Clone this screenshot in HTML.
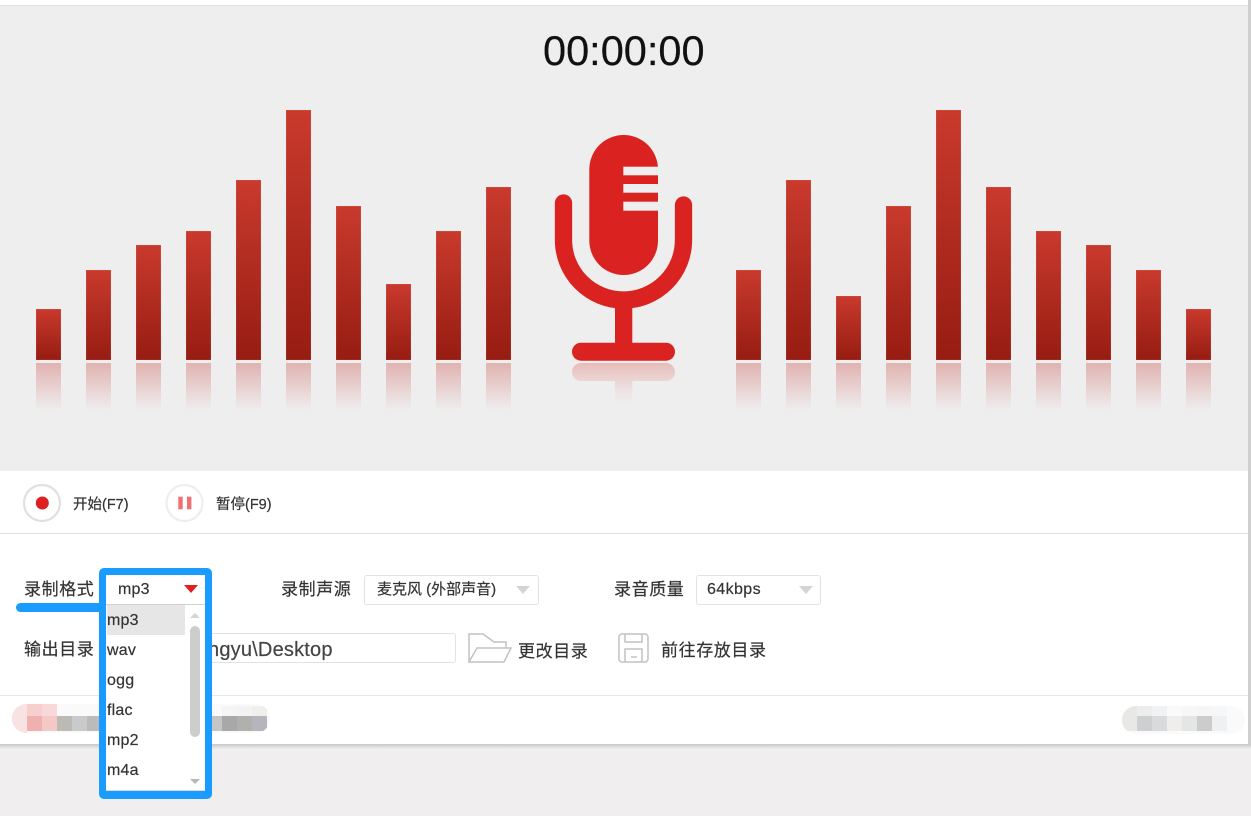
<!DOCTYPE html>
<html lang="zh">
<head>
<meta charset="utf-8">
<title>录音</title>
<style>
html{margin:0;padding:0;width:1251px;height:816px;overflow:hidden;background:#f0eeef}
body{margin:0;padding:0;width:1251px;height:816px;overflow:hidden;background:#f0eeef;position:relative;font-family:"Liberation Sans","Noto Sans CJK SC",sans-serif;color:#333;filter:blur(.35px)}
.a{position:absolute}
.t{position:absolute;white-space:nowrap;line-height:24px;height:24px;-webkit-text-stroke:.2px currentColor}
.l{font-size:17px;letter-spacing:.6px;color:#333}
.bar{position:absolute;width:25px;background:linear-gradient(#c93a2d,#971c12);box-shadow:inset 0 0 0 .5px rgba(255,255,255,.12)}
.ref{position:absolute;top:363px;width:25px;height:50px;background:linear-gradient(rgba(214,130,126,.55),rgba(238,238,238,0) 95%)}
.sel{position:absolute;box-sizing:border-box;height:30px;top:575px;background:#fff;border:1px solid #e2e2e2;border-radius:3px}
.tri{position:absolute;width:0;height:0;border-left:7px solid transparent;border-right:7px solid transparent;border-top:8px solid #d4d4d4}
.it{position:absolute;left:107px;font-size:16px;line-height:20px;letter-spacing:.2px;color:#333;-webkit-text-stroke:.2px currentColor}
.m{position:absolute;width:15px}
</style>
</head>
<body>
<div class="a" style="left:0;top:0;width:1251px;height:745px;background:#fff"></div>
<div class="a" style="left:1248px;top:0;width:3px;height:745px;background:#cfcfcf"></div>
<div class="a" style="left:0;top:5px;width:1248px;height:1px;background:#e4e4e4"></div>
<div class="a" style="left:0;top:6px;width:1248px;height:465px;background:#eeeeee"></div>
<div class="a" style="left:0;top:744px;width:1251px;height:5px;background:linear-gradient(#c9c9c9,#f0eeef)"></div>

<div class="t" style="left:543px;top:34px;font-size:41.5px;line-height:34px;height:34px;color:#111">00:00:00</div>

<!-- bars -->
<div class="bar" style="left:36px;top:309px;height:51px"></div>
<div class="bar" style="left:86px;top:270px;height:90px"></div>
<div class="bar" style="left:136px;top:245px;height:115px"></div>
<div class="bar" style="left:186px;top:231px;height:129px"></div>
<div class="bar" style="left:236px;top:180px;height:180px"></div>
<div class="bar" style="left:286px;top:110px;height:250px"></div>
<div class="bar" style="left:336px;top:206px;height:154px"></div>
<div class="bar" style="left:386px;top:284px;height:76px"></div>
<div class="bar" style="left:436px;top:231px;height:129px"></div>
<div class="bar" style="left:486px;top:187px;height:173px"></div>
<div class="bar" style="left:736px;top:270px;height:90px"></div>
<div class="bar" style="left:786px;top:180px;height:180px"></div>
<div class="bar" style="left:836px;top:296px;height:64px"></div>
<div class="bar" style="left:886px;top:206px;height:154px"></div>
<div class="bar" style="left:936px;top:110px;height:250px"></div>
<div class="bar" style="left:986px;top:187px;height:173px"></div>
<div class="bar" style="left:1036px;top:231px;height:129px"></div>
<div class="bar" style="left:1086px;top:245px;height:115px"></div>
<div class="bar" style="left:1136px;top:270px;height:90px"></div>
<div class="bar" style="left:1186px;top:309px;height:51px"></div>

<div class="ref" style="left:36px"></div><div class="ref" style="left:86px"></div><div class="ref" style="left:136px"></div><div class="ref" style="left:186px"></div><div class="ref" style="left:236px"></div><div class="ref" style="left:286px"></div><div class="ref" style="left:336px"></div><div class="ref" style="left:386px"></div><div class="ref" style="left:436px"></div><div class="ref" style="left:486px"></div>
<div class="ref" style="left:736px"></div><div class="ref" style="left:786px"></div><div class="ref" style="left:836px"></div><div class="ref" style="left:886px"></div><div class="ref" style="left:936px"></div><div class="ref" style="left:986px"></div><div class="ref" style="left:1036px"></div><div class="ref" style="left:1086px"></div><div class="ref" style="left:1136px"></div><div class="ref" style="left:1186px"></div>

<!-- microphone -->
<svg class="a" style="left:0;top:0" width="1251" height="471" viewBox="0 0 1251 471">
  <defs>
    <linearGradient id="rf" x1="0" y1="363" x2="0" y2="410" gradientUnits="userSpaceOnUse">
      <stop offset="0" stop-color="#e29a96" stop-opacity=".6"/>
      <stop offset=".45" stop-color="#e8c0be" stop-opacity=".45"/>
      <stop offset="1" stop-color="#eeeeee" stop-opacity="0"/>
    </linearGradient>
  </defs>
  <rect x="589.3" y="135" width="68.7" height="140" rx="34.35" fill="#da2320"/>
  <rect x="623.3" y="166.7" width="36" height="8.6" fill="#eeeeee"/>
  <rect x="623.3" y="184" width="36" height="8.7" fill="#eeeeee"/>
  <rect x="623.3" y="201.7" width="36" height="9" fill="#eeeeee"/>
  <path d="M563.5 203V240A60 60 0 0 0 683.5 240V205" fill="none" stroke="#da2320" stroke-width="17.3" stroke-linecap="round"/>
  <rect x="615" y="300" width="17.3" height="50" fill="#da2320"/>
  <rect x="572" y="342.7" width="103" height="18" rx="9" fill="#da2320"/>
  <rect x="572" y="363" width="103" height="18" rx="9" fill="url(#rf)"/>
  <rect x="615" y="381" width="17.3" height="30" fill="url(#rf)"/>
</svg>

<!-- toolbar -->
<svg class="a" style="left:0;top:471px" width="300" height="62" viewBox="0 471 300 62">
  <circle cx="42" cy="503" r="18" fill="#fff" stroke="#e0e0e0" stroke-width="2.2"/>
  <circle cx="42.300" cy="503" r="6.500" fill="#e02020"/>
  <circle cx="184.500" cy="503" r="18" fill="#fff" stroke="#eeeeee" stroke-width="2.2"/>
  <rect x="178.300" y="496.700" width="4.400" height="12.600" fill="#ee7070"/>
  <rect x="187" y="496.700" width="4.400" height="12.600" fill="#ee7070"/>
</svg>
<div class="t" style="left:73px;top:493px;font-size:14.5px;color:#333">开始(F7)</div>
<div class="t" style="left:216px;top:493px;font-size:14.5px;color:#333">暂停(F9)</div>
<div class="a" style="left:0;top:533px;width:1248px;height:1px;background:#e2e2e2"></div>

<!-- labels and selects -->
<div class="t l" style="left:24px;top:578px">录制格式</div>
<div class="t l" style="left:24px;top:638px">输出目录</div>
<div class="t l" style="left:281px;top:578px">录制声源</div>
<div class="sel" style="left:364px;width:175px"></div>
<div class="t" style="left:377px;top:578px;font-size:15px;color:#333">麦克风 (外部声音)</div>
<div class="tri" style="left:516px;top:586px"></div>
<div class="t l" style="left:614px;top:578px">录音质量</div>
<div class="sel" style="left:696px;width:125px"></div>
<div class="t" style="left:707px;top:578px;font-size:16px;letter-spacing:.4px;color:#333">64kbps</div>
<div class="tri" style="left:799px;top:586px"></div>

<!-- path input -->
<div class="a" style="left:200px;top:633px;width:256px;height:30px;box-sizing:border-box;background:#fff;border:1px solid #e2e2e2;border-radius:3px"></div>
<div class="t" style="left:208px;top:638px;font-size:20px;letter-spacing:.2px;color:#444">ngyu\Desktop</div>

<svg class="a" style="left:460px;top:625px" width="200" height="45" viewBox="460 625 200 45" fill="none" stroke="#c2c2c2" stroke-width="1.500">
  <path d="M469 662V634H483L494 642H506V648"/>
  <path d="M469 662L477 648H511L504 662Z"/>
  <rect x="619" y="634" width="29" height="28" rx="3"/>
  <path d="M625 634V642H642V634"/>
  <path d="M625 662V649H642V662"/>
  <path d="M631 657H637"/>
</svg>
<div class="t l" style="left:518px;top:640px;color:#333">更改目录</div>
<div class="t l" style="left:661px;top:639px;color:#333">前往存放目录</div>

<div class="a" style="left:0;top:695px;width:1248px;height:1px;background:#e6e6e6"></div>

<!-- blurred mosaic left -->
<div class="a" style="left:12px;top:704px;width:258px;height:29px;border-radius:14px;background:#fafafa;overflow:hidden">
  <div class="m" style="left:0;top:0;height:29px;background:#f9e2e2"></div>
  <div class="m" style="left:15px;top:0;height:12px;background:#f8cfcf"></div>
  <div class="m" style="left:15px;top:12px;height:15px;background:#f0b0b0"></div>
  <div class="m" style="left:30px;top:0;height:12px;background:#f8d8d8"></div>
  <div class="m" style="left:30px;top:12px;height:15px;background:#f5c8c8"></div>
  <div class="m" style="left:45px;top:12px;height:15px;background:#bdb9b5"></div>
  <div class="m" style="left:60px;top:12px;height:15px;background:#c9cacc"></div>
  <div class="m" style="left:75px;top:12px;height:15px;background:#bbbbbb"></div>
  <div class="m" style="left:195px;top:12px;height:15px;background:#c5c5c5"></div>
  <div class="m" style="left:210px;top:12px;height:15px;background:#a8a8a8"></div>
  <div class="m" style="left:225px;top:12px;height:15px;background:#b0b0ac"></div>
  <div class="m" style="left:240px;top:12px;height:15px;background:#b5b5bb"></div>
  <div class="m" style="left:210px;top:2px;height:10px;background:#f5f5f5"></div>
  <div class="m" style="left:225px;top:2px;height:10px;background:#f3f3f3"></div>
  <div class="m" style="left:240px;top:2px;height:10px;background:#eef0ee"></div>
</div>

<!-- blurred mosaic right -->
<div class="a" style="left:1122px;top:706px;width:123px;height:28px;border-radius:14px;background:#fafafa;overflow:hidden">
  <div class="m" style="left:0;top:0;height:25px;background:#e8e8e6"></div>
  <div class="m" style="left:15px;top:0;height:10px;background:#ededeb"></div>
  <div class="m" style="left:15px;top:10px;height:15px;background:#ccd0d0"></div>
  <div class="m" style="left:30px;top:0;height:10px;background:#f0f2f4"></div>
  <div class="m" style="left:30px;top:10px;height:15px;background:#d8dadc"></div>
  <div class="m" style="left:45px;top:10px;height:15px;background:#f0eeec"></div>
  <div class="m" style="left:60px;top:0;height:10px;background:#f7f7f9"></div>
  <div class="m" style="left:60px;top:10px;height:15px;background:#e4e6e6"></div>
  <div class="m" style="left:75px;top:0;height:10px;background:#f8f6f4"></div>
  <div class="m" style="left:75px;top:10px;height:15px;background:#cccccc"></div>
  <div class="m" style="left:90px;top:0;height:10px;background:#f5f7f8"></div>
  <div class="m" style="left:90px;top:10px;height:15px;background:#eef0f2"></div>
</div>

<!-- blue underline -->
<div class="a" style="left:16px;top:603px;width:90px;height:9px;border-radius:5px 0 0 5px;background:#1a9bff"></div>

<!-- dropdown -->
<div class="a" style="left:99px;top:568px;width:113px;height:231px;box-sizing:border-box;border:7px solid #1a9bff;border-bottom-width:8px;border-radius:5px;background:#fff"></div>
<div class="a" style="left:106px;top:604px;width:99px;height:1px;background:#d0d0d0"></div>
<div class="a" style="left:106px;top:790px;width:99px;height:1px;background:#d8d8d8"></div>
<div class="t" style="left:118px;top:578px;font-size:16px;letter-spacing:.2px;color:#333">mp3</div>
<div class="a" style="left:184px;top:585px;width:0;height:0;border-left:7px solid transparent;border-right:7px solid transparent;border-top:8px solid #e02020"></div>
<div class="a" style="left:107px;top:605px;width:78px;height:30px;background:#e6e6e6"></div>
<div class="it" style="top:611px">mp3</div>
<div class="it" style="top:641px">wav</div>
<div class="it" style="top:671px">ogg</div>
<div class="it" style="top:701px">flac</div>
<div class="it" style="top:731px">mp2</div>
<div class="it" style="top:761px">m4a</div>
<div class="a" style="left:189.500px;top:626px;width:10px;height:111px;border-radius:5px;background:#cdcdcd"></div>
<div class="a" style="left:190px;top:613px;width:0;height:0;border-left:5px solid transparent;border-right:5px solid transparent;border-bottom:5px solid #d6d6d6"></div>
<div class="a" style="left:190px;top:779px;width:0;height:0;border-left:5px solid transparent;border-right:5px solid transparent;border-top:5px solid #b8b8b8"></div>
</body>
</html>
